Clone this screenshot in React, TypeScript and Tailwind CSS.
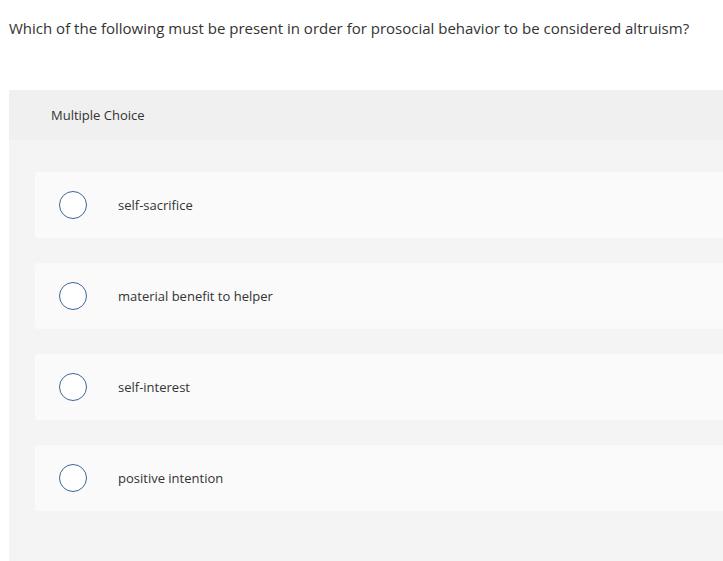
const OPTIONS = ["self-sacrifice", "material benefit to helper", "self-interest", "positive intention"]

function Radio() {
  return (
    <span className="shrink-0 w-[28px] h-[28px] rounded-full border-[1.5px] border-[#3a6796] bg-white" />
  )
}

export default function App() {
  return (
    <div
      className="w-[723px] h-[561px] overflow-hidden bg-white text-[#333]"
      style={{ fontFamily: "'Open Sans', 'Liberation Sans', sans-serif" }}
    >
      <p className="pl-[9px] pt-[18px] text-[15px] leading-[20px]">
        Which of the following must be present in order for prosocial behavior to be considered altruism?
      </p>

      <div className="ml-[9px] mt-[52px] w-[800px] bg-[#f4f4f4] pb-[60px]">
        <div className="h-[50px] bg-[#f0f0f0] flex items-center pl-[42px] pt-[2px] text-[13px]">
          Multiple Choice
        </div>

        <div className="flex flex-col gap-[25px] pt-[32px] pl-[26px]">
          {OPTIONS.map(opt => (
            <div key={opt} className="h-[66px] bg-[#fafafa] rounded-l-[3px] flex items-center pl-[24px]">
              <Radio />
              <span className="ml-[31px] pt-[2px] text-[13px]">{opt}</span>
            </div>
          ))}
        </div>
      </div>
    </div>
  )
}
